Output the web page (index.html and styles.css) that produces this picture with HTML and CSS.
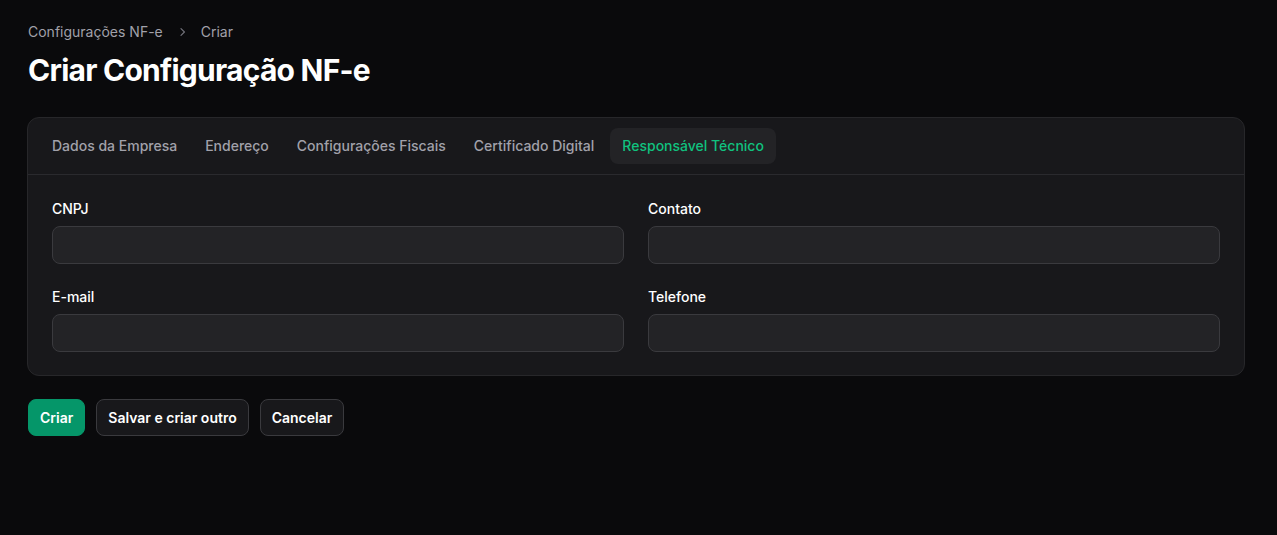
FILE: index.html
```html
<!DOCTYPE html>
<html lang="pt-BR">

<head>
    <meta charset="UTF-8">
    <meta name="viewport" content="width=device-width, initial-scale=1.0">
    <title>Criar Configuração NF-e</title>
    <link rel="stylesheet" href="styles.css">
</head>

<body>
    <div class="page">
        <nav class="breadcrumbs">
            <a href="#">Configurações NF-e</a>
            <svg class="crumb-sep" width="16" height="16" viewBox="0 0 20 20" fill="currentColor">
                <path fill-rule="evenodd" d="M8.22 5.22a.75.75 0 0 1 1.06 0l4.25 4.25a.75.75 0 0 1 0 1.06l-4.25 4.25a.75.75 0 0 1-1.06-1.06L11.94 10 8.22 6.28a.75.75 0 0 1 0-1.06Z" clip-rule="evenodd" />
            </svg>
            <span>Criar</span>
        </nav>
        <h1 class="page-title">Criar Configuração NF-e</h1>

        <div class="card">
            <div class="tab-buttons">
                <button class="tab-button" data-tab="empresa">Dados da Empresa</button>
                <button class="tab-button" data-tab="endereco">Endereço</button>
                <button class="tab-button" data-tab="fiscais">Configurações Fiscais</button>
                <button class="tab-button" data-tab="certificado">Certificado Digital</button>
                <button class="tab-button active" data-tab="responsavel">Responsável Técnico</button>
            </div>

            <div class="tab-content active" id="responsavel">
                <div class="form-grid">
                    <div class="field">
                        <label for="cnpj">CNPJ</label>
                        <input class="field-input" id="cnpj" type="text">
                    </div>
                    <div class="field">
                        <label for="contato">Contato</label>
                        <input class="field-input" id="contato" type="text">
                    </div>
                    <div class="field">
                        <label for="email">E-mail</label>
                        <input class="field-input" id="email" type="email">
                    </div>
                    <div class="field">
                        <label for="telefone">Telefone</label>
                        <input class="field-input" id="telefone" type="text">
                    </div>
                </div>
            </div>
        </div>

        <div class="actions">
            <button class="btn btn-primary">Criar</button>
            <button class="btn">Salvar e criar outro</button>
            <button class="btn">Cancelar</button>
        </div>
    </div>
</body>

</html>
```

FILE: styles.css
```css
body {
    margin: 0;
    background-color: #0a0a0c;
    color: #fff;
    font-family: Inter, "Noto Sans", sans-serif;
}

.page {
    padding: 22px 32px 22px 27px;
}

.breadcrumbs {
    display: flex;
    align-items: center;
    gap: 11px;
    padding-left: 1px;
    font-size: 14px;
    line-height: 20px;
    color: #a1a1aa;
}

.breadcrumbs a {
    color: #a1a1aa;
    text-decoration: none;
}

.crumb-sep {
    color: #71717a;
}

.page-title {
    margin: 10px 0 0 1px;
    font-size: 30px;
    line-height: 36px;
    font-weight: 700;
    letter-spacing: -0.75px;
}

.card {
    margin-top: 29px;
    background: #18181b;
    border: 1px solid #27272a;
    border-radius: 12px;
}

.tab-buttons {
    display: flex;
    gap: 4px;
    padding: 10px 12px;
    border-bottom: 1px solid #2a2a2e;
}

.tab-button {
    height: 36px;
    padding: 0 12px 1px;
    background: none;
    border: none;
    border-radius: 8px;
    font-family: inherit;
    font-size: 14px;
    font-weight: 500;
    color: #a1a1aa;
    cursor: pointer;
}

.tab-button.active {
    background: #232326;
    color: #10c27f;
}

.tab-content {
    display: none;
    padding: 24px 24px 23px;
}

.tab-content.active {
    display: block;
}

.form-grid {
    display: grid;
    grid-template-columns: 1fr 1fr;
    column-gap: 24px;
    row-gap: 23px;
}

.field {
    display: flex;
    flex-direction: column;
    gap: 7px;
}

.field label {
    font-size: 14px;
    line-height: 20px;
    font-weight: 500;
    color: #fff;
}

.field-input {
    box-sizing: border-box;
    height: 38px;
    padding: 0 12px;
    background: #232326;
    border: 1px solid #3a3a3e;
    border-radius: 8px;
    color: #fff;
    font-family: inherit;
    font-size: 14px;
    outline: none;
}

.actions {
    display: flex;
    gap: 11px;
    margin: 23px 0 0 1px;
}

.btn {
    height: 37px;
    padding: 0 11px;
    background: #18181b;
    border: 1px solid #3a3a3e;
    border-radius: 8px;
    color: #fff;
    font-family: inherit;
    font-size: 14px;
    font-weight: 600;
    cursor: pointer;
}

.btn-primary {
    background: #059669;
    border-color: #059669;
}
```
